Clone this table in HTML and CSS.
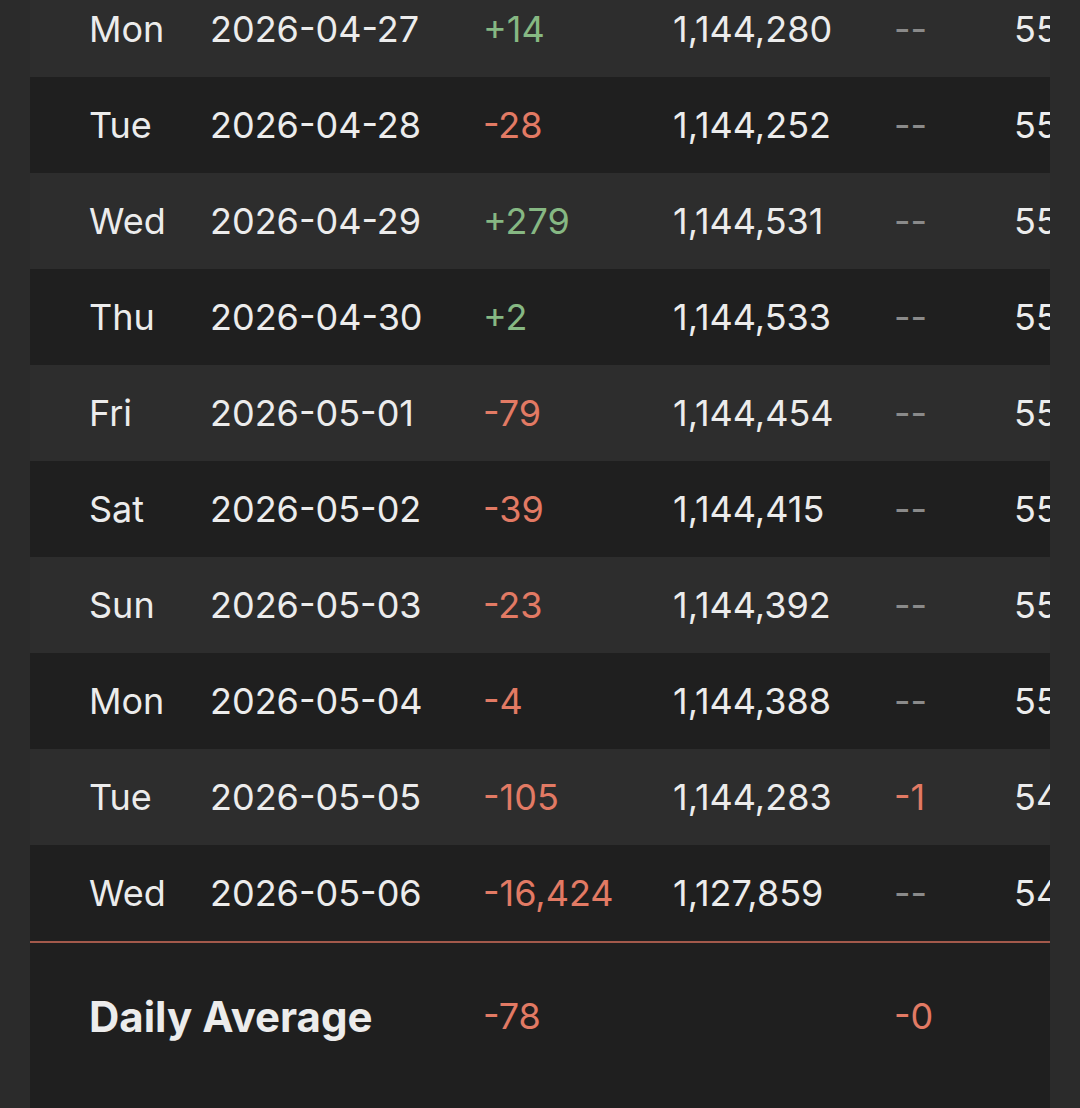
FILE: index.html
```html
<!DOCTYPE html>
<html>
<head>
<meta charset="utf-8">
<link rel="stylesheet" href="styles.css">
</head>
<body>
<div class="page">
  <div class="table">
    <div class="row odd"><span>Mon</span><span>2026-04-27</span><span class="pos">+14</span><span>1,144,280</span><span class="dim">--</span><span>55,412</span></div>
    <div class="row even"><span>Tue</span><span>2026-04-28</span><span class="neg">-28</span><span>1,144,252</span><span class="dim">--</span><span>55,412</span></div>
    <div class="row odd"><span>Wed</span><span>2026-04-29</span><span class="pos">+279</span><span>1,144,531</span><span class="dim">--</span><span>55,412</span></div>
    <div class="row even"><span>Thu</span><span>2026-04-30</span><span class="pos">+2</span><span>1,144,533</span><span class="dim">--</span><span>55,412</span></div>
    <div class="row odd"><span>Fri</span><span>2026-05-01</span><span class="neg">-79</span><span>1,144,454</span><span class="dim">--</span><span>55,412</span></div>
    <div class="row even"><span>Sat</span><span>2026-05-02</span><span class="neg">-39</span><span>1,144,415</span><span class="dim">--</span><span>55,412</span></div>
    <div class="row odd"><span>Sun</span><span>2026-05-03</span><span class="neg">-23</span><span>1,144,392</span><span class="dim">--</span><span>55,412</span></div>
    <div class="row even"><span>Mon</span><span>2026-05-04</span><span class="neg">-4</span><span>1,144,388</span><span class="dim">--</span><span>55,412</span></div>
    <div class="row odd"><span>Tue</span><span>2026-05-05</span><span class="neg">-105</span><span>1,144,283</span><span class="neg">-1</span><span>54,411</span></div>
    <div class="row even last"><span>Wed</span><span>2026-05-06</span><span class="neg">-16,424</span><span>1,127,859</span><span class="dim">--</span><span>54,411</span></div>
    <div class="row foot"><span class="label">Daily Average</span><span class="neg">-78</span><span class="neg">-0</span></div>
  </div>
</div>
</body>
</html>
```
FILE: styles.css
```css
html, body {
  margin: 0;
  padding: 0;
  background: #2b2b2b;
  height: 1108px;
  overflow: hidden;
}
.page {
  padding: 0 30px;
  margin-top: -19px;
}
.table {
  width: 1020px;
  overflow: hidden;
  font-family: Inter, "Noto Sans", sans-serif;
  font-size: 36px;
  color: #ececec;
}
.row {
  display: grid;
  grid-template-columns: 121px 273px 190px 221px 120px 200px;
  align-items: center;
  height: 96px;
  padding-left: 59px;
  white-space: nowrap;
}
.odd { background: #2d2d2d; }
.even { background: #1f1f1f; }
.last { border-bottom: 2px solid #a3594b; }
.foot {
  background: #1f1f1f;
  height: 146px;
  grid-template-columns: 394px 411px 200px;
  padding-bottom: 40px;
}
.foot .label {
  font-weight: 700;
  font-size: 42px;
}
.pos { color: #86b883; }
.neg { color: #e27a64; }
.dim { color: #8a8a8a; }
```
